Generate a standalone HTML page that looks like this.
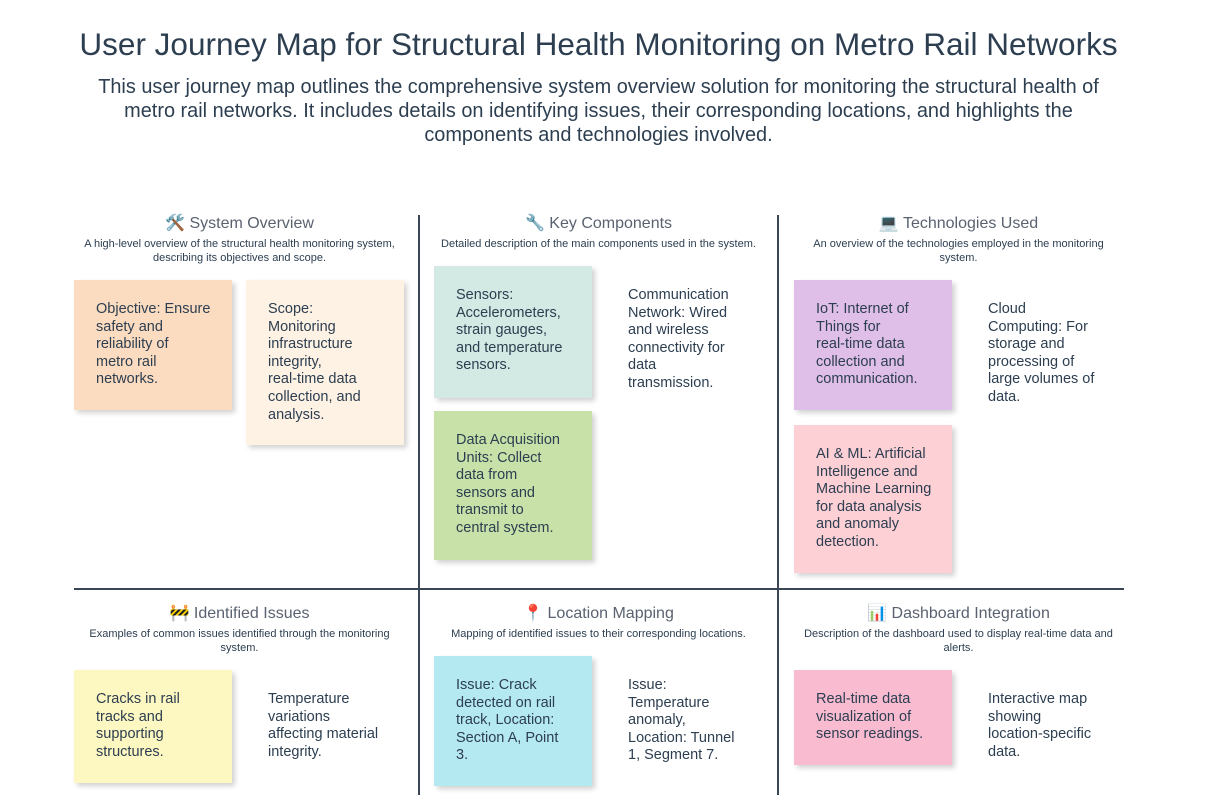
<!DOCTYPE html>
<html><head><meta charset="utf-8"><style>
body{margin:0;width:1209px;height:795px;background:#fff;position:relative;overflow:hidden;font-family:"Liberation Sans",sans-serif;color:#2c3e50}
.a{position:absolute}
h1{position:absolute;left:0;width:1197px;top:26px;margin:0;text-align:center;font-size:31.5px;font-weight:normal;color:#2c3e50}
.sub{left:30px;width:1137px;top:75px;text-align:center;font-size:19.9px;line-height:24px;color:#2c3e50}
.hd{text-align:center;font-size:16px;color:#5a6270;width:345px}
.ds{text-align:center;font-size:11px;line-height:14px;color:#2c3e50;width:345px}
.c{position:absolute;width:158px;box-sizing:border-box;padding:21px 8px 0 22px;font-size:14.5px;line-height:17.6px;color:#2c3e50;box-shadow:3px 3px 5px rgba(0,0,0,.18)}
.w{box-shadow:none}
.vl{position:absolute;width:2px;background:#3a4656}
</style></head><body>
<h1>User Journey Map for Structural Health Monitoring on Metro Rail Networks</h1>
<div class="a sub">This user journey map outlines the comprehensive system overview solution for monitoring the structural health of<br>metro rail networks. It includes details on identifying issues, their corresponding locations, and highlights the<br>components and technologies involved.</div>

<div class="vl" style="left:418px;top:215px;height:580px"></div>
<div class="vl" style="left:777px;top:215px;height:580px"></div>
<div class="a" style="left:74px;top:588px;width:1050px;height:2px;background:#3a4656"></div>

<div class="a hd" style="left:67px;top:213px">🛠️ System Overview</div>
<div class="a ds" style="left:52px;width:375px;top:237px">A high-level overview of the structural health monitoring system,<br>describing its objectives and scope.</div>
<div class="a hd" style="left:426px;top:213px">🔧 Key Components</div>
<div class="a ds" style="left:411px;width:375px;top:237px">Detailed description of the main components used in the system.</div>
<div class="a hd" style="left:786px;top:213px">💻 Technologies Used</div>
<div class="a ds" style="left:771px;width:375px;top:237px">An overview of the technologies employed in the monitoring<br>system.</div>
<div class="a hd" style="left:67px;top:603px">🚧 Identified Issues</div>
<div class="a ds" style="left:52px;width:375px;top:627px">Examples of common issues identified through the monitoring<br>system.</div>
<div class="a hd" style="left:426px;top:603px">📍 Location Mapping</div>
<div class="a ds" style="left:411px;width:375px;top:627px">Mapping of identified issues to their corresponding locations.</div>
<div class="a hd" style="left:786px;top:603px">📊 Dashboard Integration</div>
<div class="a ds" style="left:771px;width:375px;top:627px">Description of the dashboard used to display real-time data and<br>alerts.</div>

<div class="c" style="left:74px;top:280px;height:130px;background:#fcdcc0">Objective: Ensure<br>safety and<br>reliability of<br>metro rail<br>networks.</div>
<div class="c" style="left:246px;top:280px;height:165px;background:#fef2e4">Scope:<br>Monitoring<br>infrastructure<br>integrity,<br>real-time data<br>collection, and<br>analysis.</div>

<div class="c" style="left:434px;top:266px;height:132px;background:#d3e9e3">Sensors:<br>Accelerometers,<br>strain gauges,<br>and temperature<br>sensors.</div>
<div class="c w" style="left:606px;top:266px;height:140px">Communication<br>Network: Wired<br>and wireless<br>connectivity for<br>data<br>transmission.</div>
<div class="c" style="left:434px;top:411px;height:149px;background:#c7e1a9">Data Acquisition<br>Units: Collect<br>data from<br>sensors and<br>transmit to<br>central system.</div>

<div class="c" style="left:794px;top:280px;height:130px;background:#dfbfe7">IoT: Internet of<br>Things for<br>real-time data<br>collection and<br>communication.</div>
<div class="c w" style="left:966px;top:280px;height:130px">Cloud<br>Computing: For<br>storage and<br>processing of<br>large volumes of<br>data.</div>
<div class="c" style="left:794px;top:425px;height:148px;background:#fdd0d6">AI &amp; ML: Artificial<br>Intelligence and<br>Machine Learning<br>for data analysis<br>and anomaly<br>detection.</div>

<div class="c" style="left:74px;top:670px;height:113px;background:#fdf7c1">Cracks in rail<br>tracks and<br>supporting<br>structures.</div>
<div class="c w" style="left:246px;top:670px;height:113px">Temperature<br>variations<br>affecting material<br>integrity.</div>
<div class="c" style="left:434px;top:656px;height:130px;background:#b5e9f1">Issue: Crack<br>detected on rail<br>track, Location:<br>Section A, Point<br>3.</div>
<div class="c w" style="left:606px;top:656px;height:130px">Issue:<br>Temperature<br>anomaly,<br>Location: Tunnel<br>1, Segment 7.</div>
<div class="c" style="left:794px;top:670px;height:95px;background:#f8bbd0">Real-time data<br>visualization of<br>sensor readings.</div>
<div class="c w" style="left:966px;top:670px;height:95px">Interactive map<br>showing<br>location-specific<br>data.</div>
</body></html>
